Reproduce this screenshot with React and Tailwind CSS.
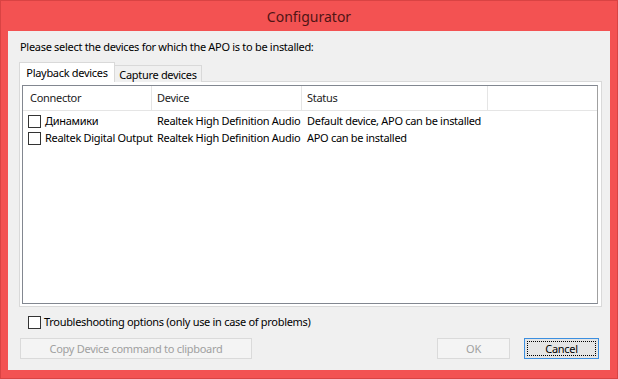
import React from 'react';

const rows = [
    { name: 'Динамики', device: 'Realtek High Definition Audio', status: 'Default device, APO can be installed' },
    { name: 'Realtek Digital Output', device: 'Realtek High Definition Audio', status: 'APO can be installed' },
];

function Checkbox() {
    return <span className="block w-[13px] h-[13px] border border-[#333333] bg-white shrink-0" />;
}

export default function App() {
    return (
        <div
            className="w-[618px] h-[379px] bg-[#f35252] border border-[#d94343] flex flex-col text-[11px] tracking-[-0.3px] text-black"
            style={{ fontFamily: '"Noto Sans", "Open Sans", sans-serif' }}
        >
            {/* title bar */}
            <div className="h-[30px] flex items-center justify-center text-[14px] tracking-normal text-[#4f1515]">
                Configurator
            </div>

            {/* client area */}
            <div className="mx-[7px] h-[339px] bg-[#f0f0f0] flex flex-col px-[11px]">
                <p className="pt-[8px] pl-[1px] leading-[16px]">
                    Please select the devices for which the APO is to be installed:
                </p>

                {/* tabs */}
                <div className="mt-[7px] flex items-end h-[20px] relative z-10">
                    <div className="h-[20px] w-[96px] bg-white border border-b-0 border-[#d9d9d9] flex items-center justify-center leading-none">
                        Playback devices
                    </div>
                    <div className="h-[17px] w-[87px] bg-[#f0f0f0] border border-l-0 border-b-0 border-[#d9d9d9] flex items-center justify-center leading-none">
                        Capture devices
                    </div>
                </div>

                {/* tab panel */}
                <div className="-mt-[1px] w-[583px] h-[226px] bg-white border border-[#d9d9d9] pt-[3px] pl-[2px]">
                    <div className="w-[576px] h-[219px] border border-[#828790] border-r-[#a0a0a0]">
                        <div className="h-[25px] flex border-b border-[#e5e5e5] text-[#222]">
                            <div className="w-[129px] pl-[7px] flex items-center border-r border-[#e5e5e5]">Connector</div>
                            <div className="w-[150px] pl-[5px] flex items-center border-r border-[#e5e5e5]">Device</div>
                            <div className="w-[186px] pl-[5px] flex items-center border-r border-[#e5e5e5]">Status</div>
                        </div>
                        <div className="pt-[2px]">
                            {rows.map((r) => (
                                <div key={r.name} className="h-[17px] flex items-center">
                                    <div className="w-[129px] pl-[5px] flex items-center gap-[4px]">
                                        <Checkbox />
                                        <span className="whitespace-nowrap">{r.name}</span>
                                    </div>
                                    <div className="w-[150px] pl-[5px] whitespace-nowrap">{r.device}</div>
                                    <div className="pl-[5px] whitespace-nowrap">{r.status}</div>
                                </div>
                            ))}
                        </div>
                    </div>
                </div>

                {/* troubleshooting */}
                <div className="mt-[9px] ml-[9px] flex items-center gap-[3px] h-[13px]">
                    <Checkbox />
                    <span>Troubleshooting options (only use in case of problems)</span>
                </div>

                {/* buttons */}
                <div className="mt-[9px] ml-[1px] flex items-center">
                    <button className="w-[232px] h-[21px] bg-[#f4f4f4] border border-[#dadada] text-[#a0a0a0] leading-none">
                        Copy Device command to clipboard
                    </button>
                    <button className="ml-auto w-[73px] h-[21px] bg-[#f4f4f4] border border-[#dadada] text-[#a0a0a0] leading-none">
                        OK
                    </button>
                    <button className="ml-[14px] w-[75px] h-[21px] bg-[#e5e5e5] border border-[#3c8fe0] p-[2px]">
                        <span className="w-full h-full flex items-center justify-center border border-dotted border-black leading-none">
                            Cancel
                        </span>
                    </button>
                </div>
            </div>
        </div>
    );
}
